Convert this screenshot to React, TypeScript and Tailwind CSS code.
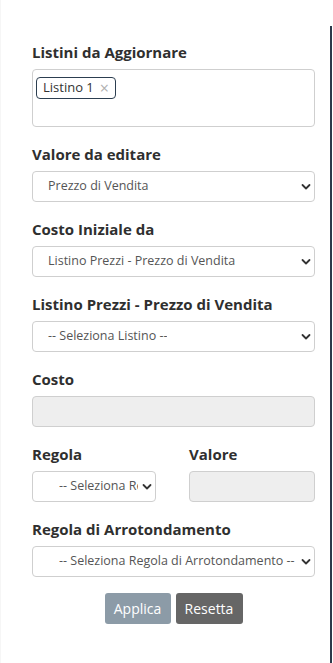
import React from "react";

const Chevron = () => (
  <svg
    className="pointer-events-none absolute right-[3px] top-1/2 -translate-y-1/2"
    width="10"
    height="7"
    viewBox="0 0 10 7"
    fill="none"
  >
    <path d="M1.5 1.5 L5 5 L8.5 1.5" stroke="#333" strokeWidth="1.8" strokeLinecap="round" strokeLinejoin="round" />
  </svg>
);

const Select = ({ value, wide = false }: { value: string; wide?: boolean }) => (
  <div className="relative h-[31px] w-full rounded-[4px] border border-[#cfcfcf] bg-white">
    <div className={`flex h-full items-center pr-[17px] ${wide ? "pl-[26px]" : "pl-[15px]"}`}>
      <span className="block overflow-hidden whitespace-nowrap text-[12.5px] text-[#555]">{value}</span>
    </div>
    <Chevron />
  </div>
);

const Label = ({ children }: { children: React.ReactNode }) => (
  <div className="mb-[6px] h-[22px] text-[15px] leading-[22px] font-bold text-[#2f2f2f]">{children}</div>
);

const Disabled = () => <div className="h-[31px] w-full rounded-[4px] border border-[#cfcfcf] bg-[#eeeeee]" />;

export default function App() {
  return (
    <div
      className="flex h-[663px] w-[333px] bg-white"
      style={{ fontFamily: '"Open Sans", "Liberation Sans", sans-serif' }}
    >
      <div className="w-[330px] border-l border-[#f6f6f6] pl-[31px] pr-[15px] pt-[41px]">
        <div className="mb-[16px]">
          <Label>Listini da Aggiornare</Label>
          <div className="h-[58px] rounded-[4px] border border-[#cfcfcf] bg-white pl-[3px] pt-[4px]">
            <div className="inline-flex h-[22px] items-center gap-[6px] rounded-[4px] border border-[#2c3e50] pl-[6px] pr-[6px] text-[13px] text-[#333]">
              <span>Listino 1</span>
              <span className="text-[16px] leading-none text-[#b0b0b0]">×</span>
            </div>
          </div>
        </div>

        <div className="mb-[16px]">
          <Label>Valore da editare</Label>
          <Select value="Prezzo di Vendita" />
        </div>

        <div className="mb-[16px]">
          <Label>Costo Iniziale da</Label>
          <Select value="Listino Prezzi - Prezzo di Vendita" />
        </div>

        <div className="mb-[16px]">
          <Label>Listino Prezzi - Prezzo di Vendita</Label>
          <Select value="-- Seleziona Listino --" />
        </div>

        <div className="mb-[16px]">
          <Label>Costo</Label>
          <Disabled />
        </div>

        <div className="mb-[16px] flex gap-[33px]">
          <div className="w-[124px]">
            <Label>Regola</Label>
            <Select value="-- Seleziona Regola --" wide />
          </div>
          <div className="flex-1">
            <Label>Valore</Label>
            <Disabled />
          </div>
        </div>

        <div className="mb-[16px]">
          <Label>Regola di Arrotondamento</Label>
          <Select value="-- Seleziona Regola di Arrotondamento --" wide />
        </div>

        <div className="flex justify-center gap-[5px]">
          <button className="h-[31px] w-[66px] rounded-[3px] bg-[#8c9ba7] text-[14px] text-white">Applica</button>
          <button className="h-[31px] w-[67px] rounded-[3px] bg-[#666666] text-[14px] text-white">Resetta</button>
        </div>
      </div>
      <div className="mt-[26px] w-[2px] bg-[#2c3a4b]" />
    </div>
  );
}
